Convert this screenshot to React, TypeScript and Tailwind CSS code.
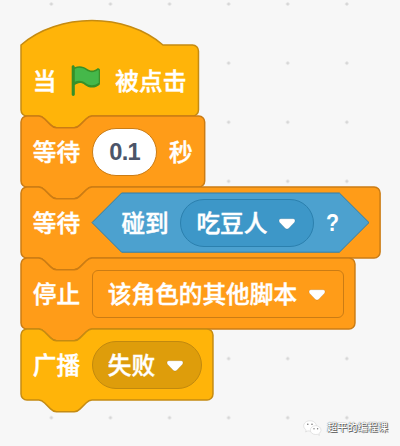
import type { ReactNode } from "react";

// one block unit in pixels
const S = 1.479;

const COLORS = {
  event: { fill: "#ffb409", stroke: "#c58b12" },
  control: { fill: "#ff9c18", stroke: "#cb7c14" },
};

const TOP_NOTCH =
  "M0,4 A4,4 0 0,1 4,0 H12 c2,0 3,1 4,2 l4,4 c1,1 2,2 4,2 h12 c2,0 3,-1 4,-2 l4,-4 c1,-1 2,-2 4,-2";
const TOP_HAT = "M0,0 c25,-22 71,-22 96,0";
const BOTTOM =
  "v40 a4,4 0 0,1 -4,4 H48 c-2,0 -3,1 -4,2 l-4,4 c-1,1 -2,2 -4,2 h-12 c-2,0 -3,-1 -4,-2 l-4,-4 c-1,-1 -2,-2 -4,-2 H4 a4,4 0 0,1 -4,-4 z";

type BlockProps = {
  kind: keyof typeof COLORS;
  width: number;
  hat?: boolean;
  children: ReactNode;
};

// The outline and the row share one grid cell, so the notch can spill out below.
function Block({ kind, width, hat, children }: BlockProps) {
  const { fill, stroke } = COLORS[kind];
  return (
    <div className="grid h-[71px]" style={{ width: width * S }}>
      <svg className="col-start-1 row-start-1 h-[71px] w-full overflow-visible">
        <path
          d={`${hat ? TOP_HAT : TOP_NOTCH} H${width - 4} a4,4 0 0,1 4,4 ${BOTTOM}`}
          transform={`scale(${S})`}
          fill={fill}
          stroke={stroke}
        />
      </svg>
      <div className="z-10 col-start-1 row-start-1 flex h-[71px] items-center gap-[11.7px] pl-[11.8px]">
        {children}
      </div>
    </div>
  );
}

function Label({ children }: { children: ReactNode }) {
  return (
    <span className="pt-1 leading-none [-webkit-text-stroke:0.45px_#fff]">
      {children}
    </span>
  );
}

function Arrow() {
  return (
    <svg className="mt-0.5 h-[12px] w-[18px] shrink-0 overflow-visible" viewBox="0 0 18 12">
      <path
        d="M3 .8 H15 C17 .8 17.6 3 16.3 4.4 L10.8 10.2 C9.7 11.3 8.3 11.3 7.2 10.2 L1.7 4.4 C.4 3 1 .8 3 .8 Z"
        fill="#fff"
        stroke="#000"
        strokeOpacity="0.1"
      />
    </svg>
  );
}

function Flag() {
  return (
    <svg className="h-[35.5px] w-[35.5px] shrink-0" viewBox="0 0 24 24">
      <path
        d="M20.8 3.7c-.4-.2-.9-.1-1.2.2-2 1.6-4.8 1.6-6.8 0-2.3-1.9-5.6-2.3-8.3-1v-.4c0-.6-.5-1-1-1s-1 .4-1 1v18.8c0 .5.5 1 1 1h.1c.5 0 1-.5 1-1v-6.4c1-.7 2.1-1.2 3.4-1.3 1.2 0 2.4.4 3.4 1.2 2.9 2.3 7 2.3 9.8 0 .3-.2.4-.5.4-.9V4.7c0-.5-.3-.9-.8-1z"
        fill="#359029"
      />
      <path
        d="M20.5 13.6c-2.6 2-6.2 2-8.6 0-2.2-1.7-5-2-7.3-.9V4.1c2.4-1.3 5.4-1 7.6.7 2.4 1.9 5.6 1.9 8 0 .1-.1.2-.1.3-.1.3 0 .3.2.3.4v8.2c0 .2-.1.2-.3.3z"
        fill="#45b84a"
      />
    </svg>
  );
}

function WeChat() {
  return (
    <svg className="h-4 w-[19px] shrink-0" viewBox="0 0 19 16">
      <g fill="#fff" stroke="#ccc" strokeWidth="0.5">
        <path d="M7 .8C3.4.8.7 3 .7 5.9c0 1.7 1 3.1 2.5 4L2.6 12l2.3-1.2c.7.2 1.4.3 2.1.3 3.6 0 6.3-2.3 6.3-5.2S10.6.8 7 .8z" />
        <path d="M12.7 5.7c-3.1 0-5.4 2-5.4 4.4s2.3 4.4 5.4 4.4c.6 0 1.2-.1 1.7-.2l2 1-.6-1.7c1.4-.8 2.2-2 2.2-3.5 0-2.4-2.3-4.4-5.3-4.4z" />
      </g>
      <g fill="#777">
        <circle cx="4.8" cy="4.3" r=".8" />
        <circle cx="9" cy="4.3" r=".8" />
        <circle cx="11" cy="8.8" r=".7" />
        <circle cx="14.6" cy="8.8" r=".7" />
      </g>
    </svg>
  );
}

export default function App() {
  return (
    <div className="relative h-[446px] w-[400px] overflow-hidden bg-[#f7f7f7] bg-[radial-gradient(circle_at_center,#d6d6d6_1.2px,transparent_1.9px)] bg-[length:59.1px_59.1px] bg-[position:21.8px_-25.5px] pt-[45px] pl-[21px] font-['Liberation_Sans','Noto_Sans_CJK_SC',sans-serif] text-[23.66px] font-medium whitespace-nowrap text-white">
      <Block kind="event" width={120} hat>
        <Label>当</Label>
        <Flag />
        <Label>被点击</Label>
      </Block>

      <Block kind="control" width={124.2}>
        <Label>等待</Label>
        <div className="flex h-[48px] w-[65.5px] items-center justify-center rounded-full border border-[#cb7c14] bg-white font-bold text-[#4c5569]">
          <span className="pt-0.5 leading-none tracking-[-0.8px]">0.1</span>
        </div>
        <Label>秒</Label>
      </Block>

      <Block kind="control" width={242.8}>
        <Label>等待</Label>
        <div className="grid h-[59.2px] w-[277px]">
          <svg className="col-start-1 row-start-1 h-[59.2px] w-[277px] overflow-visible">
            <path
              d="M29.6 0 H247.4 L277 29.6 L247.4 59.2 H29.6 L0 29.6 Z"
              fill="#4ca1cf"
              stroke="#2e7fac"
            />
          </svg>
          <div className="z-10 col-start-1 row-start-1 flex h-[59.2px] items-center gap-[11.7px] pl-[29.6px]">
            <Label>碰到</Label>
            <div className="flex h-[48px] w-[134px] items-center gap-[11px] rounded-full border border-[#2b80ae] bg-[#3d97c8] pl-[15px]">
              <Label>吃豆人</Label>
              <Arrow />
            </div>
            <span className="origin-left scale-x-90 pt-0.5 leading-none font-bold">?</span>
          </div>
        </div>
      </Block>

      <Block kind="control" width={225.8}>
        <Label>停止</Label>
        <div className="flex h-[48px] w-[252px] items-center gap-[11px] rounded-[6px] border border-[#cb7c14] pl-[15px]">
          <Label>该角色的其他脚本</Label>
          <Arrow />
        </div>
      </Block>

      <Block kind="event" width={129.8}>
        <Label>广播</Label>
        <div className="flex h-[48px] w-[110px] items-center gap-[11px] rounded-full border border-[#c1890f] bg-[#de9d0b] pl-[15px]">
          <Label>失败</Label>
          <Arrow />
        </div>
      </Block>

      {/* watermark over the canvas */}
      <div className="absolute right-[12px] bottom-[10px] flex items-center gap-[5px] text-[10.2px] leading-none text-white [text-shadow:0_0_1px_#222,1px_1px_0_#777]">
        <WeChat />
        <span>超平的编程课</span>
      </div>
    </div>
  );
}
